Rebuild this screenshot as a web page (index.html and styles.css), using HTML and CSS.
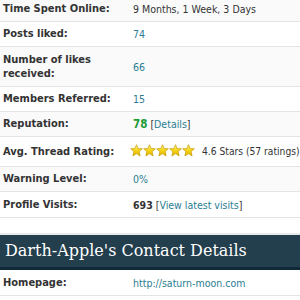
FILE: index.html
```html
<!DOCTYPE html>
<html>
<head>
<meta charset="utf-8">
<link rel="stylesheet" href="styles.css">
</head>
<body>
<table class="tbl">
  <tr class="r1 alt"><td class="lab">Time Spent Online:</td><td class="val">9 Months, 1 Week, 3 Days</td></tr>
  <tr><td class="lab">Posts liked:</td><td class="val"><a>74</a></td></tr>
  <tr class="alt two"><td class="lab">Number of likes<br>received:</td><td class="val"><a>66</a></td></tr>
  <tr><td class="lab">Members Referred:</td><td class="val"><a>15</a></td></tr>
  <tr class="alt"><td class="lab">Reputation:</td><td class="val"><b class="rep">78</b> [<a>Details</a>]</td></tr>
  <tr class="stars-row"><td class="lab">Avg. Thread Rating:</td><td class="val"><span class="stars"><svg width="13" height="13" viewBox="0 0 20 20"><use href="#star"/></svg><svg width="13" height="13" viewBox="0 0 20 20"><use href="#star"/></svg><svg width="13" height="13" viewBox="0 0 20 20"><use href="#star"/></svg><svg width="13" height="13" viewBox="0 0 20 20"><use href="#star"/></svg><svg width="13" height="13" viewBox="0 0 20 20"><use href="#star"/></svg></span><span class="rating">4.6 Stars (57 ratings)</span></td></tr>
  <tr class="alt"><td class="lab">Warning Level:</td><td class="val"><a>0%</a></td></tr>
  <tr class="last"><td class="lab">Profile Visits:</td><td class="val"><b class="num">693</b> [<a>View latest visits</a>]</td></tr>
</table>
<div class="section">
  <div class="head">Darth-Apple's Contact Details</div>
  <table class="tbl">
    <tr class="last"><td class="lab">Homepage:</td><td class="val"><a>http://saturn-moon.com</a></td></tr>
  </table>
</div>
<svg width="0" height="0" class="defs">
  <defs>
    <linearGradient id="g" x1="0" y1="0" x2="0" y2="1">
      <stop offset="0" stop-color="#fff6a0"/>
      <stop offset="0.5" stop-color="#f6d516"/>
      <stop offset="1" stop-color="#e2b400"/>
    </linearGradient>
    <polygon id="star" points="10,1 12.6,7 19,7.4 14,11.6 15.6,18.4 10,14.8 4.4,18.4 6,11.6 1,7.4 7.4,7" fill="url(#g)" stroke="#c49a00" stroke-width="1.1" stroke-linejoin="round"/>
  </defs>
</svg>
</body>
</html>
```
FILE: styles.css
```css
html, body {
  margin: 0;
  padding: 0;
  background: #fff;
}
body {
  font-family: "DejaVu Sans", Verdana, sans-serif;
  font-stretch: condensed;
  font-size: 10.5px;
  color: #333;
  width: 300px;
  overflow: hidden;
}
.tbl {
  width: 300px;
  border-collapse: collapse;
  table-layout: fixed;
  margin-top: -3px;
}
.tbl td {
  box-sizing: border-box;
  border-bottom: 1px solid #e4e4e4;
  padding: 5px 3px 5px 3px;
  line-height: 14px;
  vertical-align: middle;
  white-space: nowrap;
}
.tbl tr.alt td {
  background: #fafafa;
}
.tbl tr.two td {
  padding-top: 6px;
  padding-bottom: 5px;
}
.tbl tr.last td {
  padding-top: 6px;
  padding-bottom: 5px;
}
.tbl tr.stars-row td {
  padding-top: 7px;
  padding-bottom: 7px;
}
.tbl td.val {
  padding-left: 3px;
  padding-right: 0;
}
.lab {
  font-weight: bold;
  font-size: 11px;
  width: 130px;
  color: #333;
}
.val a {
  color: #2a7d92;
  text-decoration: none;
}
.rep {
  color: #1f9b36;
  font-size: 11.5px;
}
.num {
  color: #333;
}
.stars {
  display: inline-flex;
  vertical-align: -2px;
  margin-left: -3px;
  margin-right: 7px;
}
.rating {
  font-size: 10.2px;
}
.section {
  margin-top: 15px;
  border-top: 2px solid #e9e9e9;
}
.section .tbl {
  margin-top: 0;
}
.head {
  background: #233e4c;
  border-bottom: 3px solid #0f2a36;
  color: #fff;
  font-family: "DejaVu Serif", serif;
  font-stretch: normal;
  font-size: 16px;
  padding: 8px 5px;
  line-height: 16px;
}
.defs {
  position: absolute;
}
```
